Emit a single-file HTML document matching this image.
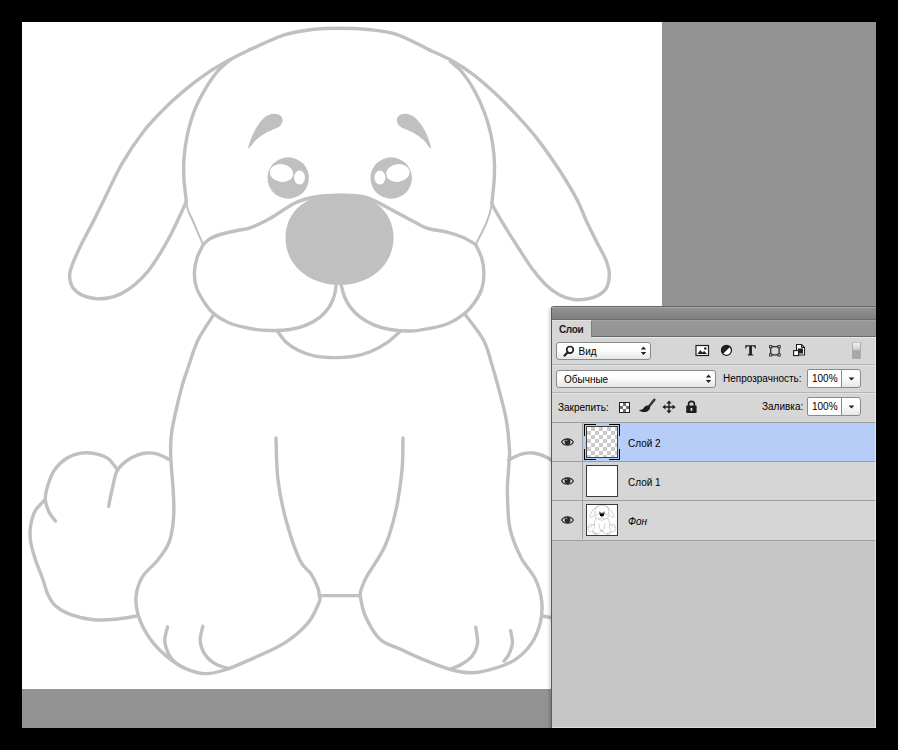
<!DOCTYPE html>
<html><head><meta charset="utf-8">
<style>
html,body{margin:0;padding:0;background:#000;}
body{width:898px;height:750px;position:relative;overflow:hidden;font-family:"Liberation Sans",sans-serif;font-size:11px;color:#000;}
.abs{position:absolute;}
#ws{left:22px;top:22px;width:854px;height:706px;background:#939393;}
#canvas{left:22px;top:22px;width:640px;height:667px;background:#fff;}
#dog{left:0;top:0;}
#panel{left:551px;top:306px;width:325px;height:422px;background:#c6c6c6;overflow:hidden;border-radius:3px 0 0 0;font-size:10px;box-shadow:-2px 2px 3px rgba(0,0,0,.16);}
#titlebar{left:0;top:0;width:325px;height:14px;background:linear-gradient(#a6a6a6 0,#a6a6a6 1px,#929292 1px,#7e7e7e 100%);border-top:1px solid #686868;border-bottom:1px solid #6a6a6a;box-sizing:border-box;}
#tabbar{left:0;top:14px;width:325px;height:17px;background:linear-gradient(#979797,#939393);border-top:1px solid #a4a4a4;border-bottom:1px solid #6a6a6a;box-sizing:border-box;}
#tab{left:1px;top:14px;width:40px;height:17px;background:#d6d6d6;border-top:1px solid #e4e4e4;box-sizing:border-box;border-right:1px solid #7c7c7c;}
#tab span{position:absolute;left:7px;top:2.500px;font-weight:bold;font-size:10px;color:#1c1c1c;letter-spacing:-0.350px;}
#controls{left:0;top:31px;width:325px;height:85px;background:#d6d6d6;}
#lborder{left:0;top:0;width:1px;height:422px;background:#5c5c5c;}
#rborder{left:324px;top:31px;width:1px;height:391px;background:rgba(255,255,255,.5);}
#bborder{left:1px;top:421px;width:324px;height:1px;background:rgba(255,255,255,.38);}
.sep{left:1px;width:324px;height:1px;background:#b4b4b4;}
.sep2{left:1px;width:324px;height:1px;background:#e4e4e4;}
.dd{border:1px solid #8a8a8a;border-radius:3px;background:linear-gradient(#ffffff,#fdfdfd 45%,#e6e6e6);box-sizing:border-box;}
.fld{border:1px solid #8a8a8a;border-radius:2px 0 0 2px;background:#fff;box-sizing:border-box;}
.row{left:1px;width:324px;height:38px;background:#d6d6d6;}
.row.sel{background:#b6cdf8;}
.eyecol{left:0;top:0;width:30px;height:38px;background:#d6d6d6;border-right:1px solid #a2a2a2;}
.thumb{left:35px;top:4px;width:32px;height:32px;box-sizing:border-box;border:1px solid #3a3a3a;background:#fff;overflow:hidden;}
.lname{left:77px;top:13px;}
.eye{left:8.500px;top:14px;}
.rl{left:1px;width:324px;height:1px;background:#9e9e9e;}
svg{display:block;}
</style></head><body>
<div id="ws" class="abs"></div>
<div id="canvas" class="abs"></div>
<svg id="dog" class="abs" width="898" height="750" viewBox="0 0 898 750">
<g fill="none" stroke="#c0c0c0" stroke-width="3.4" stroke-linecap="round" stroke-linejoin="round">
<path stroke-width="2" d="M186.3,201.0 C186.6,202.5 187.0,206.8 188.0,210.0 C189.0,213.2 190.6,215.7 192.5,220.0 C194.4,224.3 197.4,231.6 199.2,235.7 C201.0,239.8 202.5,243.1 203.2,244.6"/>
<path stroke-width="2" d="M491.9,203.4 C491.6,204.8 491.0,208.5 490.0,212.0 C489.0,215.5 488.1,219.1 485.7,224.5 C483.3,229.9 477.4,241.2 475.7,244.6"/>
<path d="M250.0,49.6 C255.6,47.2 273.3,38.5 283.6,35.1 C293.9,31.8 302.9,30.6 312.0,29.5 C321.1,28.4 328.7,28.2 338.0,28.2 C347.3,28.2 358.1,28.4 368.0,29.5 C377.9,30.6 386.9,31.2 397.2,34.6 C407.5,38.1 424.5,47.6 430.0,50.2"/>
<path d="M186.3,201.0 C185.9,197.3 184.3,185.6 183.9,178.7 C183.5,171.8 183.4,166.6 183.9,159.5 C184.4,152.4 185.3,144.2 187.1,136.0 C188.9,127.8 191.5,118.2 194.5,110.4 C197.5,102.6 201.3,95.7 205.2,89.1 C209.1,82.5 213.7,75.8 218.0,70.9 C222.3,66.0 228.7,61.5 230.8,59.6"/>
<path d="M491.9,203.4 C492.3,198.9 494.0,184.5 494.4,176.5 C494.8,168.5 494.6,162.3 494.0,155.2 C493.4,148.1 492.4,141.0 490.8,133.9 C489.2,126.8 487.1,119.6 484.4,112.5 C481.7,105.4 478.5,98.0 474.8,91.2 C471.1,84.5 466.1,77.0 462.0,72.0 C457.9,67.0 452.2,63.1 450.3,61.3"/>
<path d="M250.0,49.6 C246.4,51.4 235.8,56.4 228.7,60.3 C221.6,64.2 214.4,68.3 207.3,73.1 C200.2,77.9 193.1,83.2 186.0,89.1 C178.9,95.0 171.8,101.2 164.7,108.3 C157.6,115.4 150.4,122.5 143.3,131.7 C136.2,140.9 128.6,152.3 122.0,163.7 C115.4,175.1 108.9,190.1 103.9,200.0 C99.0,209.9 96.1,216.0 92.3,223.4 C88.5,230.8 84.5,237.7 81.2,244.6 C77.9,251.5 74.2,259.4 72.3,264.6 C70.4,269.8 69.6,272.1 69.6,275.8 C69.6,279.5 70.4,283.8 72.3,286.9 C74.2,290.0 77.5,292.8 81.2,294.7 C84.9,296.6 90.0,297.9 94.5,298.5 C99.0,299.1 103.4,298.8 107.9,298.0 C112.4,297.2 116.8,295.8 121.3,293.6 C125.8,291.4 130.2,288.4 134.6,284.7 C139.0,281.0 143.5,276.9 148.0,271.3 C152.5,265.7 157.3,258.0 161.4,251.3 C165.5,244.6 168.8,238.4 172.5,231.2 C176.2,223.9 181.3,212.8 183.6,207.8 C185.9,202.8 185.9,202.1 186.3,201.0"/>
<path d="M430.0,50.2 C433.6,51.9 444.2,56.3 451.3,60.3 C458.4,64.3 465.6,68.8 472.7,74.1 C479.8,79.4 486.9,85.7 494.0,92.3 C501.1,98.9 508.2,106.0 515.3,113.6 C522.4,121.2 529.6,129.0 536.7,138.1 C543.8,147.2 551.2,157.7 558.0,168.0 C564.8,178.3 572.6,191.3 577.2,200.0 C581.9,208.7 582.6,212.9 585.9,220.0 C589.2,227.1 593.6,235.7 597.0,242.4 C600.4,249.1 604.0,255.0 606.0,260.2 C608.0,265.4 609.1,269.1 609.3,273.5 C609.5,277.9 608.7,283.4 607.0,286.9 C605.3,290.4 602.8,292.6 599.3,294.7 C595.8,296.8 590.4,298.4 585.9,299.2 C581.4,299.9 577.0,299.9 572.5,299.2 C568.0,298.4 563.7,297.1 559.2,294.7 C554.8,292.3 550.3,289.0 545.8,284.7 C541.3,280.4 536.8,275.1 532.4,269.1 C528.0,263.2 523.6,255.9 519.1,249.0 C514.6,242.1 509.8,234.6 505.7,227.9 C501.6,221.2 496.9,213.1 494.6,209.0 C492.3,204.9 492.3,204.3 491.9,203.4"/>
<path d="M203.2,244.6 C204.4,243.6 207.0,240.2 210.4,238.4 C213.8,236.6 218.9,234.9 223.7,233.5 C228.5,232.1 234.9,230.9 239.3,230.0 C243.7,229.1 244.9,229.8 250.0,227.9 C255.1,226.0 262.5,222.7 270.0,218.5 C277.5,214.3 287.5,206.6 295.0,203.0 C302.5,199.4 307.5,198.3 315.0,197.0 C322.5,195.7 331.5,195.2 340.0,195.3 C348.5,195.4 357.2,195.0 366.0,197.5 C374.8,200.0 384.0,205.9 393.0,210.5 C402.0,215.1 413.8,221.9 420.0,225.0 C426.2,228.1 425.4,227.8 430.0,229.0 C434.6,230.2 442.2,230.9 447.8,232.3 C453.4,233.7 458.8,235.4 463.4,237.5 C468.0,239.6 473.6,243.4 475.7,244.6"/>
<path d="M203.2,244.6 C202.2,246.8 198.5,253.2 197.0,258.0 C195.5,262.8 194.3,268.3 194.3,273.5 C194.3,278.7 195.1,283.8 197.0,289.0 C198.9,294.2 203.1,300.6 205.9,304.7 C208.7,308.8 210.0,310.6 213.7,313.6 C217.4,316.6 222.1,320.0 228.2,322.5 C234.2,325.0 243.0,327.2 250.0,328.5 C257.0,329.8 263.3,330.3 270.0,330.5 C276.7,330.7 284.1,330.4 290.1,329.5 C296.1,328.6 301.1,327.2 306.1,325.1 C311.1,323.0 316.4,320.1 320.2,317.1 C324.0,314.1 326.9,310.5 329.2,307.0 C331.5,303.5 333.0,299.7 334.2,296.0 C335.4,292.3 335.9,286.8 336.2,285.0"/>
<path d="M475.7,244.6 C476.7,246.8 480.3,253.2 481.7,258.0 C483.1,262.8 483.9,268.3 483.9,273.5 C483.9,278.7 483.3,284.3 481.7,289.1 C480.1,293.9 477.4,298.4 474.5,302.5 C471.6,306.6 468.9,310.1 464.5,313.6 C460.1,317.1 453.6,321.2 447.8,323.7 C442.1,326.1 436.2,327.1 430.0,328.3 C423.8,329.5 417.0,330.8 410.4,331.0 C403.8,331.2 396.3,330.5 390.3,329.5 C384.3,328.5 379.3,327.2 374.3,325.1 C369.3,323.0 364.2,320.1 360.2,317.1 C356.2,314.1 352.9,310.6 350.2,307.1 C347.5,303.6 345.7,299.7 344.2,296.0 C342.7,292.3 341.7,286.8 341.2,285.0"/>
<path d="M278.1,332.1 C279.4,333.8 282.8,339.2 286.1,342.2 C289.4,345.2 293.4,347.9 298.1,350.2 C302.8,352.5 308.1,354.6 314.1,355.8 C320.1,357.0 327.5,357.5 334.2,357.6 C340.9,357.7 348.2,357.2 354.2,356.2 C360.2,355.2 364.9,354.0 370.3,351.8 C375.7,349.6 381.5,346.5 386.3,343.2 C391.1,339.9 397.1,334.0 399.3,332.1"/>
<path d="M213.7,314.7 C211.1,318.9 202.1,331.6 198.0,340.0 C193.9,348.4 191.8,356.7 189.0,365.0 C186.2,373.3 183.8,379.2 181.0,390.0 C178.2,400.8 173.7,420.0 172.0,430.0 C170.3,440.0 170.7,443.8 170.6,450.0 C170.5,456.2 171.0,460.2 171.4,467.0 C171.8,473.8 172.8,482.5 173.2,490.6 C173.6,498.8 174.3,507.4 173.7,515.9 C173.1,524.3 172.1,533.9 169.4,541.3 C166.8,548.6 162.3,554.1 157.8,560.0 C153.3,565.9 146.1,570.7 142.5,576.7 C138.9,582.7 136.8,589.7 136.1,596.2 C135.4,602.7 136.2,608.7 138.4,615.7 C140.6,622.7 144.9,631.3 149.5,638.0 C154.1,644.7 160.2,650.9 166.2,656.0 C172.2,661.1 179.2,665.7 185.7,668.6 C192.2,671.5 198.7,673.4 205.2,673.6 C211.7,673.8 216.3,672.7 224.7,670.0 C233.0,667.3 245.1,662.0 255.3,657.4 C265.5,652.8 277.1,647.9 285.9,642.1 C294.7,636.3 302.6,629.3 308.2,622.6 C313.8,615.9 317.4,606.3 319.3,601.8 C321.2,597.3 319.3,596.6 319.3,595.6"/>
<path d="M464.5,313.6 C467.7,318.0 478.9,331.4 483.5,340.0 C488.1,348.6 489.6,357.3 492.0,365.0 C494.4,372.7 495.6,376.8 498.0,386.0 C500.4,395.2 504.4,409.3 506.3,420.0 C508.2,430.7 509.1,441.7 509.5,450.0 C509.9,458.3 508.9,463.0 508.5,470.0 C508.1,477.0 507.2,482.3 507.4,492.0 C507.6,501.7 507.7,517.3 509.9,528.1 C512.1,538.9 516.5,548.5 520.7,556.9 C524.9,565.3 531.6,571.4 535.1,578.6 C538.6,585.8 540.7,593.0 541.6,600.2 C542.5,607.4 542.2,614.6 540.5,621.8 C538.8,629.0 535.7,637.1 531.5,643.4 C527.3,649.7 521.6,655.4 515.3,659.6 C509.0,663.8 500.9,666.4 493.7,668.6 C486.5,670.8 479.3,672.6 472.1,672.8 C464.9,672.9 458.9,671.8 450.5,669.5 C442.1,667.2 430.0,662.2 421.6,658.8 C413.2,655.4 406.9,652.2 400.0,649.0 C393.1,645.8 385.8,644.8 380.0,639.3 C374.2,633.8 368.5,623.0 365.2,615.7 C361.9,608.4 361.0,599.0 360.2,595.6"/>
<path d="M276.0,438.0 C276.3,445.0 276.3,466.3 278.0,480.0 C279.7,493.7 282.4,506.7 286.0,520.0 C289.6,533.3 295.6,551.0 299.8,560.0 C304.0,569.0 308.0,569.3 311.0,573.9 C314.0,578.5 316.5,584.2 317.9,587.8 C319.3,591.4 319.1,594.3 319.3,595.6"/>
<path d="M403.0,438.0 C402.8,443.3 403.2,458.0 402.0,470.0 C400.8,482.0 398.8,497.3 396.0,510.0 C393.2,522.7 389.9,534.9 385.0,546.0 C380.1,557.1 370.6,569.4 366.6,576.7 C362.6,584.0 362.1,586.9 361.0,590.0 C359.9,593.1 360.3,594.7 360.2,595.6"/>
<path d="M319.3,595.6 C326.1,595.6 353.4,595.6 360.2,595.6"/>
<path d="M170.5,460.0 C168.2,459.0 161.1,455.0 156.7,453.9 C152.3,452.8 148.3,452.6 144.1,453.2 C139.9,453.8 135.2,455.7 131.4,457.7 C127.6,459.7 123.8,462.8 121.3,465.3 C118.8,467.8 117.7,469.1 116.2,472.9 C114.7,476.7 113.7,482.5 112.4,488.1 C111.1,493.7 109.2,503.3 108.6,506.3"/>
<path d="M117.5,470.0 C116.0,468.2 112.2,461.7 108.6,459.0 C105.0,456.3 100.6,454.9 96.0,453.9 C91.4,452.9 85.9,452.3 80.8,453.2 C75.7,454.1 70.0,456.1 65.6,459.0 C61.2,461.9 57.2,466.0 54.2,470.4 C51.2,474.8 49.3,480.8 47.8,485.6 C46.3,490.5 45.1,495.1 45.3,499.5 C45.5,503.9 47.4,508.6 49.1,512.2 C50.8,515.8 54.4,519.5 55.4,521.0"/>
<path d="M45.3,499.5 C43.6,501.4 37.7,506.5 35.2,510.9 C32.8,515.3 31.4,521.0 30.6,526.1 C29.8,531.2 29.8,535.8 30.6,541.3 C31.4,546.8 33.2,552.7 35.2,559.0 C37.2,565.3 40.7,573.3 42.8,579.2 C44.9,585.1 45.7,590.0 47.8,594.4 C49.9,598.8 51.6,602.4 55.4,605.8 C59.2,609.2 64.3,612.4 70.6,614.7 C76.9,617.0 85.8,619.0 93.4,619.7 C101.0,620.5 108.9,619.8 116.2,619.2 C123.5,618.6 133.5,616.5 137.0,616.0"/>
<path d="M508.5,460.0 C510.8,459.0 517.9,455.0 522.3,453.9 C526.7,452.8 530.7,452.6 534.9,453.2 C539.1,453.8 543.8,455.7 547.6,457.7 C551.4,459.7 555.2,462.8 557.7,465.3 C560.2,467.8 561.3,469.1 562.8,472.9 C564.3,476.7 565.3,482.5 566.6,488.1 C567.9,493.7 569.8,503.3 570.4,506.3"/>
<path d="M561.5,470.0 C563.0,468.2 566.8,461.7 570.4,459.0 C574.0,456.3 578.4,454.9 583.0,453.9 C587.6,452.9 593.1,452.3 598.2,453.2 C603.3,454.1 609.0,456.1 613.4,459.0 C617.8,461.9 621.8,466.0 624.8,470.4 C627.8,474.8 629.7,480.8 631.2,485.6 C632.7,490.5 633.9,495.1 633.7,499.5 C633.5,503.9 631.6,508.6 629.9,512.2 C628.2,515.8 624.6,519.5 623.6,521.0"/>
<path d="M633.7,499.5 C635.4,501.4 641.3,506.5 643.8,510.9 C646.2,515.3 647.6,521.0 648.4,526.1 C649.2,531.2 649.2,535.8 648.4,541.3 C647.6,546.8 645.8,552.7 643.8,559.0 C641.8,565.3 638.3,573.3 636.2,579.2 C634.1,585.1 633.3,590.0 631.2,594.4 C629.1,598.8 627.4,602.4 623.6,605.8 C619.8,609.2 614.7,612.4 608.4,614.7 C602.1,617.0 593.2,619.0 585.6,619.7 C578.0,620.5 570.1,619.8 562.8,619.2 C555.5,618.6 545.5,616.5 542.0,616.0"/>
<path d="M167.6,626.8 C167.1,629.1 164.6,636.1 164.8,640.7 C165.0,645.4 167.1,651.0 169.0,654.7 C170.9,658.4 173.7,660.9 176.0,663.0 C178.3,665.1 181.8,666.8 183.0,667.5"/>
<path d="M202.9,626.3 C202.4,628.7 199.8,636.0 200.2,640.7 C200.6,645.4 202.5,650.8 205.2,654.7 C207.9,658.7 212.3,662.1 216.3,664.4 C220.3,666.7 226.9,667.9 229.0,668.6"/>
<path d="M475.7,627.2 C476.0,629.9 478.1,638.6 477.5,643.4 C476.9,648.2 474.7,652.6 472.1,656.0 C469.5,659.4 465.6,661.8 462.0,664.0 C458.4,666.2 452.4,668.2 450.5,669.0"/>
<path d="M510.6,630.8 C510.9,632.9 512.8,639.4 512.4,643.4 C512.0,647.4 509.9,652.1 508.5,655.0 C507.1,657.9 504.8,660.0 504.0,661.0"/>

</g>
<g fill="#c0c0c0" stroke="none">
<!-- nose -->
<path d="M285.500,238 C285.500,210 308,193.800 339.500,193.800 C371,193.800 393.500,210 393.500,238 C393.500,265 370,285 339.500,285 C309,285 285.500,265 285.500,238Z"/>
<!-- eyes -->
<circle cx="288.2" cy="178" r="20.700"/>
<circle cx="391.2" cy="178" r="20.700"/>
<!-- brows -->
<path d="M248.3,148.5 C247.7,147.7 250.8,139.0 252.5,135.0 C254.2,131.0 256.2,127.6 258.4,124.6 C260.5,121.6 262.9,118.6 265.4,116.8 C267.9,115.0 271.1,114.0 273.6,113.8 C276.1,113.6 278.7,114.4 280.2,115.4 C281.7,116.4 282.6,118.2 282.6,120.0 C282.6,121.8 281.8,124.3 280.0,126.0 C278.2,127.7 274.7,128.7 272.0,130.0 C269.3,131.3 266.7,132.3 264.0,134.0 C261.3,135.7 258.6,137.6 256.0,140.0 C253.4,142.4 248.9,149.3 248.3,148.5Z"/>
<path d="M431.1,148.5 C431.7,147.7 428.6,139.0 426.9,135.0 C425.2,131.0 423.1,127.6 421.0,124.6 C418.9,121.6 416.5,118.6 414.0,116.8 C411.5,115.0 408.3,114.0 405.8,113.8 C403.3,113.6 400.7,114.4 399.2,115.4 C397.7,116.4 396.8,118.2 396.8,120.0 C396.8,121.8 397.6,124.3 399.4,126.0 C401.2,127.7 404.7,128.7 407.4,130.0 C410.1,131.3 412.7,132.3 415.4,134.0 C418.1,135.7 420.8,137.6 423.4,140.0 C426.0,142.4 430.5,149.3 431.1,148.5Z"/>
</g>
<g>
<ellipse cx="281.500" cy="173" rx="11.800" ry="8.800" fill="#fff" transform="rotate(8 281.500 173)"/>
<ellipse cx="299.500" cy="177.600" rx="7" ry="8.400" fill="#c0c0c0"/>
<ellipse cx="299.500" cy="177.600" rx="5.500" ry="7" fill="#fff"/>
<ellipse cx="397.900" cy="173" rx="11.800" ry="8.800" fill="#fff" transform="rotate(-8 397.900 173)"/>
<ellipse cx="379.900" cy="177.600" rx="7" ry="8.400" fill="#c0c0c0"/>
<ellipse cx="379.900" cy="177.600" rx="5.500" ry="7" fill="#fff"/>
</g>
</svg>

<div id="panel" class="abs">
  <div id="titlebar" class="abs"></div>
  <div id="tabbar" class="abs"></div>
  <div id="tab" class="abs"><span>Слои</span></div>
  <div id="controls" class="abs"></div>
  <div class="abs" style="left:41px;top:31px;width:284px;height:1px;background:#e9e9e9;"></div>
  <!-- row1: filter -->
  <div class="abs dd" style="left:5px;top:36px;width:95px;height:18px;"></div>
  <svg class="abs" style="left:12px;top:39px" width="12" height="12" viewBox="0 0 12 12"><circle cx="7" cy="4.800" r="3.300" fill="#fff" stroke="#1e1e1e" stroke-width="1.700"/><path d="M4.600,7.400 L1.600,10.600" stroke="#1e1e1e" stroke-width="2.200" stroke-linecap="round"/></svg>
  <div class="abs" style="left:27.500px;top:40px;">Вид</div>
  <svg class="abs" style="left:89px;top:40px" width="7" height="10" viewBox="0 0 7 10"><path d="M3.500,0.500 L6.200,3.500 L0.800,3.500Z M0.800,6 L6.200,6 L3.500,9Z" fill="#222"/><rect x="0.800" y="4.300" width="5.400" height="0.900" fill="#222" opacity="0"/></svg>
  <!-- filter icons -->
  <svg class="abs" style="left:144px;top:38px" width="15" height="13" viewBox="0 0 15 13"><rect x="1" y="1.500" width="12.500" height="10" fill="#fff" stroke="#1e1e1e" stroke-width="1.200"/><path d="M2.500,10 L5.300,6 L7.300,8.600 L9.200,7 L12,10Z" fill="#1e1e1e"/><circle cx="10.300" cy="4.500" r="1.200" fill="#1e1e1e"/></svg>
  <svg class="abs" style="left:169px;top:38px" width="13" height="13" viewBox="0 0 13 13"><circle cx="6.500" cy="6.300" r="5" fill="#fff" stroke="#1e1e1e" stroke-width="1.300"/><path d="M10.300,2.800 A5,5 0 0 0 2.800,10 Z" fill="#1e1e1e"/></svg>
  <svg class="abs" style="left:194px;top:39px" width="12" height="11" viewBox="0 0 12 11"><path d="M0.300,0.200 L10.800,0.200 L10.800,3.600 L10,3.600 C9.800,2 9.200,1.300 7.800,1.200 L6.900,1.200 L6.900,8.600 C6.900,9.500 7.300,9.700 8.400,9.800 L8.400,10.400 L2.700,10.400 L2.700,9.800 C3.800,9.700 4.200,9.500 4.200,8.600 L4.200,1.200 L3.300,1.200 C1.900,1.300 1.300,2 1.100,3.600 L0.300,3.600Z" fill="#1e1e1e"/></svg>
  <svg class="abs" style="left:218px;top:39px" width="12" height="12" viewBox="0 0 12 12"><rect x="1.700" y="1.700" width="8.400" height="8.200" fill="none" stroke="#1e1e1e" stroke-width="1.200"/><g fill="#fff" stroke="#1e1e1e" stroke-width="0.900"><rect x="0.600" y="0.600" width="2.200" height="2.200"/><rect x="9" y="0.600" width="2.200" height="2.200"/><rect x="0.600" y="8.800" width="2.200" height="2.200"/><rect x="9" y="8.800" width="2.200" height="2.200"/></g></svg>
  <svg class="abs" style="left:241px;top:37px" width="14" height="14" viewBox="0 0 14 14"><path d="M4.500,1.500 L9.500,1.500 L12.500,4.500 L12.500,12 L4.500,12Z" fill="#fff" stroke="#1e1e1e" stroke-width="1.100"/><path d="M9.500,1.500 L9.500,4.500 L12.500,4.500" fill="none" stroke="#1e1e1e" stroke-width="1"/><rect x="6" y="5.500" width="5" height="5" fill="#1e1e1e"/><rect x="1.600" y="7.600" width="5" height="5" fill="#fff" stroke="#1e1e1e" stroke-width="1.100"/></svg>
  <!-- toggle -->
  <div class="abs" style="left:301px;top:36px;width:9px;height:17px;box-sizing:border-box;border:1px solid #ababab;border-top-color:#c4c4c4;background:linear-gradient(#f2f2f2,#cdcdcd 46%,#a9a9a9 46%,#a7a7a7);"></div>
  <div class="abs sep" style="top:58px;"></div><div class="abs sep2" style="top:59px;"></div>
  <!-- row2: blend -->
  <div class="abs dd" style="left:5px;top:64px;width:160px;height:18px;"></div>
  <div class="abs" style="left:13px;top:68px;">Обычные</div>
  <svg class="abs" style="left:154px;top:68px" width="7" height="10" viewBox="0 0 7 10"><path d="M3.500,0.500 L6.200,3.500 L0.800,3.500Z M0.800,6 L6.200,6 L3.500,9Z" fill="#222"/><rect x="0.800" y="4.300" width="5.400" height="0.900" fill="#222" opacity="0"/></svg>
  <div class="abs" style="left:172px;top:67px;">Непрозрачность:</div>
  <div class="abs fld" style="left:256px;top:63px;width:35px;height:19px;"></div>
  <div class="abs dd" style="left:290px;top:63px;width:20px;height:19px;border-radius:0 3px 3px 0;"></div>
  <div class="abs" style="left:261px;top:67px;">100%</div>
  <svg class="abs" style="left:297px;top:71px" width="7" height="4" viewBox="0 0 7 4"><path d="M0.600,0.400 L6.400,0.400 L3.500,3.600Z" fill="#222"/></svg>
  <div class="abs sep" style="top:86px;"></div><div class="abs sep2" style="top:87px;"></div>
  <!-- row3: lock -->
  <div class="abs" style="left:7px;top:96px;">Закрепить:</div>
  <svg class="abs" style="left:68px;top:96px" width="11" height="11" viewBox="0 0 11 11" shape-rendering="crispEdges"><rect x="0.500" y="0.500" width="10" height="10" fill="#fff" stroke="#1e1e1e" stroke-width="1"/><g fill="#6e6e6e"><rect x="4" y="1" width="3" height="3"/><rect x="1" y="4" width="3" height="3"/><rect x="7" y="4" width="3" height="3"/><rect x="4" y="7" width="3" height="3"/></g></svg>
  <svg class="abs" style="left:87px;top:92px" width="18" height="16" viewBox="0 0 18 16"><path d="M16.300,1.800 L10.600,9" stroke="#3a3a3a" stroke-width="2.600" stroke-linecap="round"/><path d="M11.600,8.300 C9.600,6.600 6.800,7.600 5.800,9.800 C5,11.500 3,12.200 1,12 C2.800,14.200 6.800,14.800 9.600,13.200 C11.800,12 12.800,9.800 11.600,8.300Z" fill="#1e1e1e"/></svg>
  <svg class="abs" style="left:111px;top:94px" width="14" height="14" viewBox="0 0 14 14"><path d="M7,0.400 L9.600,3.400 L7.700,3.400 L7.700,6.300 L10.600,6.300 L10.600,4.400 L13.600,7 L10.600,9.600 L10.600,7.700 L7.700,7.700 L7.700,10.600 L9.600,10.600 L7,13.600 L4.400,10.600 L6.300,10.600 L6.300,7.700 L3.400,7.700 L3.400,9.600 L0.400,7 L3.400,4.400 L3.400,6.300 L6.300,6.300 L6.300,3.400 L4.400,3.400Z" fill="#1e1e1e"/></svg>
  <svg class="abs" style="left:134px;top:94px" width="13" height="14" viewBox="0 0 13 14"><path d="M3.600,6 L3.600,4.200 A2.900,2.900 0 0 1 9.400,4.200 L9.400,6" fill="none" stroke="#1e1e1e" stroke-width="1.700"/><rect x="1.200" y="5.400" width="10.400" height="7.600" rx="0.800" fill="#1e1e1e"/><rect x="5.600" y="8" width="1.700" height="2.800" fill="#e8e8e8"/></svg>
  <div class="abs" style="left:211px;top:95px;">Заливка:</div>
  <div class="abs fld" style="left:256px;top:91px;width:35px;height:19px;"></div>
  <div class="abs dd" style="left:290px;top:91px;width:20px;height:19px;border-radius:0 3px 3px 0;"></div>
  <div class="abs" style="left:261px;top:95px;">100%</div>
  <svg class="abs" style="left:297px;top:99px" width="7" height="4" viewBox="0 0 7 4"><path d="M0.600,0.400 L6.400,0.400 L3.500,3.600Z" fill="#222"/></svg>
  <!-- layers -->
  <div class="abs rl" style="top:116px;"></div>
  <div class="abs row sel" style="top:117px;"><div class="abs eyecol"></div><svg class="abs eye" width="13" height="10" viewBox="0 0 13 10"><path d="M0.700,5 C2.800,0.700 10.200,0.700 12.300,5 C10.200,9.300 2.800,9.300 0.700,5Z" fill="#e4e4e4" stroke="#2a2a2a" stroke-width="1.250"/><ellipse cx="6.500" cy="4.900" rx="3" ry="3.100" fill="#2a2a2a"/><ellipse cx="5.400" cy="3.400" rx="1.100" ry="0.750" fill="#8a8a8a"/></svg>
    <div class="abs thumb" style="left:34px;top:3px;border-color:#404040;"><svg width="30" height="30"><defs><pattern id="ck" width="8" height="8" patternUnits="userSpaceOnUse"><rect width="8" height="8" fill="#fff"/><rect x="4" y="0" width="4" height="4" fill="#cbcbcb"/><rect x="0" y="4" width="4" height="4" fill="#cbcbcb"/></pattern></defs><rect width="30" height="30" fill="url(#ck)"/></svg></div>
    <svg class="abs" style="left:32px;top:1px" width="36" height="36" viewBox="0 0 36 36" shape-rendering="crispEdges"><path d="M12,0.500 L0.500,0.500 L0.500,12 M25,0.500 L35.500,0.500 L35.500,12 M0.500,25 L0.500,35.500 L12,35.500 M35.500,25 L35.500,35.500 L25,35.500" fill="none" stroke="#000" stroke-width="1"/></svg>
    <div class="abs lname" style="left:76px;top:15px;">Слой 2</div></div>
  <div class="abs rl" style="top:155px;"></div>
  <div class="abs row" style="top:156px;"><div class="abs eyecol"></div><svg class="abs eye" width="13" height="10" viewBox="0 0 13 10"><path d="M0.700,5 C2.800,0.700 10.200,0.700 12.300,5 C10.200,9.300 2.800,9.300 0.700,5Z" fill="#e4e4e4" stroke="#2a2a2a" stroke-width="1.250"/><ellipse cx="6.500" cy="4.900" rx="3" ry="3.100" fill="#2a2a2a"/><ellipse cx="5.400" cy="3.400" rx="1.100" ry="0.750" fill="#8a8a8a"/></svg><div class="abs thumb" style="left:34px;top:3px;"></div><div class="abs lname" style="left:76px;top:15px;">Слой 1</div></div>
  <div class="abs rl" style="top:194px;"></div>
  <div class="abs row" style="top:195px;height:39px;"><div class="abs eyecol"></div><svg class="abs eye" width="13" height="10" viewBox="0 0 13 10"><path d="M0.700,5 C2.800,0.700 10.200,0.700 12.300,5 C10.200,9.300 2.800,9.300 0.700,5Z" fill="#e4e4e4" stroke="#2a2a2a" stroke-width="1.250"/><ellipse cx="6.500" cy="4.900" rx="3" ry="3.100" fill="#2a2a2a"/><ellipse cx="5.400" cy="3.400" rx="1.100" ry="0.750" fill="#8a8a8a"/></svg><div class="abs thumb" style="left:34px;top:3px;"><svg width="30" height="30" viewBox="22 22 640 667"><g fill="none" stroke="#8f8f8f" stroke-width="9" stroke-linecap="round"><path d="M250.0,49.6 C255.6,47.2 273.3,38.5 283.6,35.1 C293.9,31.8 302.9,30.6 312.0,29.5 C321.1,28.4 328.7,28.2 338.0,28.2 C347.3,28.2 358.1,28.4 368.0,29.5 C377.9,30.6 386.9,31.2 397.2,34.6 C407.5,38.1 424.5,47.6 430.0,50.2"/><path d="M186.3,201.0 C185.9,197.3 184.3,185.6 183.9,178.7 C183.5,171.8 183.4,166.6 183.9,159.5 C184.4,152.4 185.3,144.2 187.1,136.0 C188.9,127.8 191.5,118.2 194.5,110.4 C197.5,102.6 201.3,95.7 205.2,89.1 C209.1,82.5 213.7,75.8 218.0,70.9 C222.3,66.0 228.7,61.5 230.8,59.6"/><path d="M491.9,203.4 C492.3,198.9 494.0,184.5 494.4,176.5 C494.8,168.5 494.6,162.3 494.0,155.2 C493.4,148.1 492.4,141.0 490.8,133.9 C489.2,126.8 487.1,119.6 484.4,112.5 C481.7,105.4 478.5,98.0 474.8,91.2 C471.1,84.5 466.1,77.0 462.0,72.0 C457.9,67.0 452.2,63.1 450.3,61.3"/><path d="M250.0,49.6 C246.4,51.4 235.8,56.4 228.7,60.3 C221.6,64.2 214.4,68.3 207.3,73.1 C200.2,77.9 193.1,83.2 186.0,89.1 C178.9,95.0 171.8,101.2 164.7,108.3 C157.6,115.4 150.4,122.5 143.3,131.7 C136.2,140.9 128.6,152.3 122.0,163.7 C115.4,175.1 108.9,190.1 103.9,200.0 C99.0,209.9 96.1,216.0 92.3,223.4 C88.5,230.8 84.5,237.7 81.2,244.6 C77.9,251.5 74.2,259.4 72.3,264.6 C70.4,269.8 69.6,272.1 69.6,275.8 C69.6,279.5 70.4,283.8 72.3,286.9 C74.2,290.0 77.5,292.8 81.2,294.7 C84.9,296.6 90.0,297.9 94.5,298.5 C99.0,299.1 103.4,298.8 107.9,298.0 C112.4,297.2 116.8,295.8 121.3,293.6 C125.8,291.4 130.2,288.4 134.6,284.7 C139.0,281.0 143.5,276.9 148.0,271.3 C152.5,265.7 157.3,258.0 161.4,251.3 C165.5,244.6 168.8,238.4 172.5,231.2 C176.2,223.9 181.3,212.8 183.6,207.8 C185.9,202.8 185.9,202.1 186.3,201.0"/><path d="M430.0,50.2 C433.6,51.9 444.2,56.3 451.3,60.3 C458.4,64.3 465.6,68.8 472.7,74.1 C479.8,79.4 486.9,85.7 494.0,92.3 C501.1,98.9 508.2,106.0 515.3,113.6 C522.4,121.2 529.6,129.0 536.7,138.1 C543.8,147.2 551.2,157.7 558.0,168.0 C564.8,178.3 572.6,191.3 577.2,200.0 C581.9,208.7 582.6,212.9 585.9,220.0 C589.2,227.1 593.6,235.7 597.0,242.4 C600.4,249.1 604.0,255.0 606.0,260.2 C608.0,265.4 609.1,269.1 609.3,273.5 C609.5,277.9 608.7,283.4 607.0,286.9 C605.3,290.4 602.8,292.6 599.3,294.7 C595.8,296.8 590.4,298.4 585.9,299.2 C581.4,299.9 577.0,299.9 572.5,299.2 C568.0,298.4 563.7,297.1 559.2,294.7 C554.8,292.3 550.3,289.0 545.8,284.7 C541.3,280.4 536.8,275.1 532.4,269.1 C528.0,263.2 523.6,255.9 519.1,249.0 C514.6,242.1 509.8,234.6 505.7,227.9 C501.6,221.2 496.9,213.1 494.6,209.0 C492.3,204.9 492.3,204.3 491.9,203.4"/><path d="M203.2,244.6 C204.4,243.6 207.0,240.2 210.4,238.4 C213.8,236.6 218.9,234.9 223.7,233.5 C228.5,232.1 234.9,230.9 239.3,230.0 C243.7,229.1 244.9,229.8 250.0,227.9 C255.1,226.0 262.5,222.7 270.0,218.5 C277.5,214.3 287.5,206.6 295.0,203.0 C302.5,199.4 307.5,198.3 315.0,197.0 C322.5,195.7 331.5,195.2 340.0,195.3 C348.5,195.4 357.2,195.0 366.0,197.5 C374.8,200.0 384.0,205.9 393.0,210.5 C402.0,215.1 413.8,221.9 420.0,225.0 C426.2,228.1 425.4,227.8 430.0,229.0 C434.6,230.2 442.2,230.9 447.8,232.3 C453.4,233.7 458.8,235.4 463.4,237.5 C468.0,239.6 473.6,243.4 475.7,244.6"/><path d="M203.2,244.6 C202.2,246.8 198.5,253.2 197.0,258.0 C195.5,262.8 194.3,268.3 194.3,273.5 C194.3,278.7 195.1,283.8 197.0,289.0 C198.9,294.2 203.1,300.6 205.9,304.7 C208.7,308.8 210.0,310.6 213.7,313.6 C217.4,316.6 222.1,320.0 228.2,322.5 C234.2,325.0 243.0,327.2 250.0,328.5 C257.0,329.8 263.3,330.3 270.0,330.5 C276.7,330.7 284.1,330.4 290.1,329.5 C296.1,328.6 301.1,327.2 306.1,325.1 C311.1,323.0 316.4,320.1 320.2,317.1 C324.0,314.1 326.9,310.5 329.2,307.0 C331.5,303.5 333.0,299.7 334.2,296.0 C335.4,292.3 335.9,286.8 336.2,285.0"/><path d="M475.7,244.6 C476.7,246.8 480.3,253.2 481.7,258.0 C483.1,262.8 483.9,268.3 483.9,273.5 C483.9,278.7 483.3,284.3 481.7,289.1 C480.1,293.9 477.4,298.4 474.5,302.5 C471.6,306.6 468.9,310.1 464.5,313.6 C460.1,317.1 453.6,321.2 447.8,323.7 C442.1,326.1 436.2,327.1 430.0,328.3 C423.8,329.5 417.0,330.8 410.4,331.0 C403.8,331.2 396.3,330.5 390.3,329.5 C384.3,328.5 379.3,327.2 374.3,325.1 C369.3,323.0 364.2,320.1 360.2,317.1 C356.2,314.1 352.9,310.6 350.2,307.1 C347.5,303.6 345.7,299.7 344.2,296.0 C342.7,292.3 341.7,286.8 341.2,285.0"/><path d="M278.1,332.1 C279.4,333.8 282.8,339.2 286.1,342.2 C289.4,345.2 293.4,347.9 298.1,350.2 C302.8,352.5 308.1,354.6 314.1,355.8 C320.1,357.0 327.5,357.5 334.2,357.6 C340.9,357.7 348.2,357.2 354.2,356.2 C360.2,355.2 364.9,354.0 370.3,351.8 C375.7,349.6 381.5,346.5 386.3,343.2 C391.1,339.9 397.1,334.0 399.3,332.1"/><path d="M213.7,314.7 C211.1,318.9 202.1,331.6 198.0,340.0 C193.9,348.4 191.8,356.7 189.0,365.0 C186.2,373.3 183.8,379.2 181.0,390.0 C178.2,400.8 173.7,420.0 172.0,430.0 C170.3,440.0 170.7,443.8 170.6,450.0 C170.5,456.2 171.0,460.2 171.4,467.0 C171.8,473.8 172.8,482.5 173.2,490.6 C173.6,498.8 174.3,507.4 173.7,515.9 C173.1,524.3 172.1,533.9 169.4,541.3 C166.8,548.6 162.3,554.1 157.8,560.0 C153.3,565.9 146.1,570.7 142.5,576.7 C138.9,582.7 136.8,589.7 136.1,596.2 C135.4,602.7 136.2,608.7 138.4,615.7 C140.6,622.7 144.9,631.3 149.5,638.0 C154.1,644.7 160.2,650.9 166.2,656.0 C172.2,661.1 179.2,665.7 185.7,668.6 C192.2,671.5 198.7,673.4 205.2,673.6 C211.7,673.8 216.3,672.7 224.7,670.0 C233.0,667.3 245.1,662.0 255.3,657.4 C265.5,652.8 277.1,647.9 285.9,642.1 C294.7,636.3 302.6,629.3 308.2,622.6 C313.8,615.9 317.4,606.3 319.3,601.8 C321.2,597.3 319.3,596.6 319.3,595.6"/><path d="M464.5,313.6 C467.7,318.0 478.9,331.4 483.5,340.0 C488.1,348.6 489.6,357.3 492.0,365.0 C494.4,372.7 495.6,376.8 498.0,386.0 C500.4,395.2 504.4,409.3 506.3,420.0 C508.2,430.7 509.1,441.7 509.5,450.0 C509.9,458.3 508.9,463.0 508.5,470.0 C508.1,477.0 507.2,482.3 507.4,492.0 C507.6,501.7 507.7,517.3 509.9,528.1 C512.1,538.9 516.5,548.5 520.7,556.9 C524.9,565.3 531.6,571.4 535.1,578.6 C538.6,585.8 540.7,593.0 541.6,600.2 C542.5,607.4 542.2,614.6 540.5,621.8 C538.8,629.0 535.7,637.1 531.5,643.4 C527.3,649.7 521.6,655.4 515.3,659.6 C509.0,663.8 500.9,666.4 493.7,668.6 C486.5,670.8 479.3,672.6 472.1,672.8 C464.9,672.9 458.9,671.8 450.5,669.5 C442.1,667.2 430.0,662.2 421.6,658.8 C413.2,655.4 406.9,652.2 400.0,649.0 C393.1,645.8 385.8,644.8 380.0,639.3 C374.2,633.8 368.5,623.0 365.2,615.7 C361.9,608.4 361.0,599.0 360.2,595.6"/><path d="M276.0,438.0 C276.3,445.0 276.3,466.3 278.0,480.0 C279.7,493.7 282.4,506.7 286.0,520.0 C289.6,533.3 295.6,551.0 299.8,560.0 C304.0,569.0 308.0,569.3 311.0,573.9 C314.0,578.5 316.5,584.2 317.9,587.8 C319.3,591.4 319.1,594.3 319.3,595.6"/><path d="M403.0,438.0 C402.8,443.3 403.2,458.0 402.0,470.0 C400.8,482.0 398.8,497.3 396.0,510.0 C393.2,522.7 389.9,534.9 385.0,546.0 C380.1,557.1 370.6,569.4 366.6,576.7 C362.6,584.0 362.1,586.9 361.0,590.0 C359.9,593.1 360.3,594.7 360.2,595.6"/><path d="M319.3,595.6 C326.1,595.6 353.4,595.6 360.2,595.6"/><path d="M170.5,460.0 C168.2,459.0 161.1,455.0 156.7,453.9 C152.3,452.8 148.3,452.6 144.1,453.2 C139.9,453.8 135.2,455.7 131.4,457.7 C127.6,459.7 123.8,462.8 121.3,465.3 C118.8,467.8 117.7,469.1 116.2,472.9 C114.7,476.7 113.7,482.5 112.4,488.1 C111.1,493.7 109.2,503.3 108.6,506.3"/><path d="M117.5,470.0 C116.0,468.2 112.2,461.7 108.6,459.0 C105.0,456.3 100.6,454.9 96.0,453.9 C91.4,452.9 85.9,452.3 80.8,453.2 C75.7,454.1 70.0,456.1 65.6,459.0 C61.2,461.9 57.2,466.0 54.2,470.4 C51.2,474.8 49.3,480.8 47.8,485.6 C46.3,490.5 45.1,495.1 45.3,499.5 C45.5,503.9 47.4,508.6 49.1,512.2 C50.8,515.8 54.4,519.5 55.4,521.0"/><path d="M45.3,499.5 C43.6,501.4 37.7,506.5 35.2,510.9 C32.8,515.3 31.4,521.0 30.6,526.1 C29.8,531.2 29.8,535.8 30.6,541.3 C31.4,546.8 33.2,552.7 35.2,559.0 C37.2,565.3 40.7,573.3 42.8,579.2 C44.9,585.1 45.7,590.0 47.8,594.4 C49.9,598.8 51.6,602.4 55.4,605.8 C59.2,609.2 64.3,612.4 70.6,614.7 C76.9,617.0 85.8,619.0 93.4,619.7 C101.0,620.5 108.9,619.8 116.2,619.2 C123.5,618.6 133.5,616.5 137.0,616.0"/><path d="M508.5,460.0 C510.8,459.0 517.9,455.0 522.3,453.9 C526.7,452.8 530.7,452.6 534.9,453.2 C539.1,453.8 543.8,455.7 547.6,457.7 C551.4,459.7 555.2,462.8 557.7,465.3 C560.2,467.8 561.3,469.1 562.8,472.9 C564.3,476.7 565.3,482.5 566.6,488.1 C567.9,493.7 569.8,503.3 570.4,506.3"/><path d="M561.5,470.0 C563.0,468.2 566.8,461.7 570.4,459.0 C574.0,456.3 578.4,454.9 583.0,453.9 C587.6,452.9 593.1,452.3 598.2,453.2 C603.3,454.1 609.0,456.1 613.4,459.0 C617.8,461.9 621.8,466.0 624.8,470.4 C627.8,474.8 629.7,480.8 631.2,485.6 C632.7,490.5 633.9,495.1 633.7,499.5 C633.5,503.9 631.6,508.6 629.9,512.2 C628.2,515.8 624.6,519.5 623.6,521.0"/><path d="M633.7,499.5 C635.4,501.4 641.3,506.5 643.8,510.9 C646.2,515.3 647.6,521.0 648.4,526.1 C649.2,531.2 649.2,535.8 648.4,541.3 C647.6,546.8 645.8,552.7 643.8,559.0 C641.8,565.3 638.3,573.3 636.2,579.2 C634.1,585.1 633.3,590.0 631.2,594.4 C629.1,598.8 627.4,602.4 623.6,605.8 C619.8,609.2 614.7,612.4 608.4,614.7 C602.1,617.0 593.2,619.0 585.6,619.7 C578.0,620.5 570.1,619.8 562.8,619.2 C555.5,618.6 545.5,616.5 542.0,616.0"/><path d="M167.6,626.8 C167.1,629.1 164.6,636.1 164.8,640.7 C165.0,645.4 167.1,651.0 169.0,654.7 C170.9,658.4 173.7,660.9 176.0,663.0 C178.3,665.1 181.8,666.8 183.0,667.5"/><path d="M202.9,626.3 C202.4,628.7 199.8,636.0 200.2,640.7 C200.6,645.4 202.5,650.8 205.2,654.7 C207.9,658.7 212.3,662.1 216.3,664.4 C220.3,666.7 226.9,667.9 229.0,668.6"/><path d="M475.7,627.2 C476.0,629.9 478.1,638.6 477.5,643.4 C476.9,648.2 474.7,652.6 472.1,656.0 C469.5,659.4 465.6,661.8 462.0,664.0 C458.4,666.2 452.4,668.2 450.5,669.0"/><path d="M510.6,630.8 C510.9,632.9 512.8,639.4 512.4,643.4 C512.0,647.4 509.9,652.1 508.5,655.0 C507.1,657.9 504.8,660.0 504.0,661.0"/></g><ellipse cx="339" cy="240" rx="50" ry="36" fill="#000"/><ellipse cx="300" cy="200" rx="24" ry="14" fill="#000"/><ellipse cx="380" cy="200" rx="24" ry="14" fill="#000"/><circle cx="288" cy="178" r="14" fill="#555"/><circle cx="391" cy="178" r="14" fill="#555"/></svg></div><div class="abs lname" style="left:76px;top:15px;font-style:italic;">Фон</div></div>
  <div class="abs rl" style="top:234px;height:1px;"></div>
  <div id="lborder" class="abs"></div>
  <div id="rborder" class="abs"></div>
  <div id="bborder" class="abs"></div>
</div>
</body></html>
